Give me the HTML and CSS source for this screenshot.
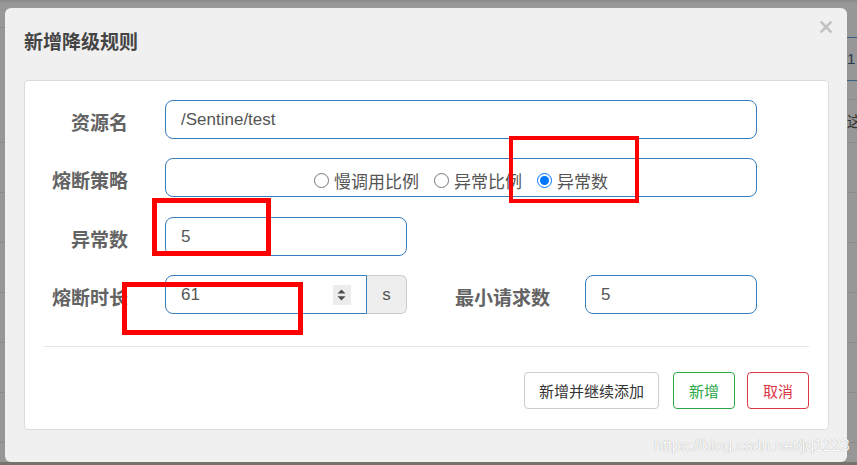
FILE: index.html
```html
<!DOCTYPE html>
<html lang="zh-CN">
<head>
<meta charset="utf-8">
<title>新增降级规则</title>
<link rel="stylesheet" href="styles.css">
</head>
<body>
<div class="page">
  <div class="bg-main">
    <div class="bg-head"></div>
    <div class="bg-tall"></div>
    <div class="bg-row"></div>
    <div class="bg-row"></div>
    <div class="bg-row"></div>
    <div class="bg-row"></div>
    <div class="bg-row"></div>
    <div class="bg-row"></div>
  </div>
  <div class="bg-side">
    <div class="side-top"></div>
    <div class="side-cell side-blue">1</div>
    <div class="side-gap"></div>
    <div class="side-cell side-cjk">这</div>
    <div class="bg-row"></div>
    <div class="bg-row"></div>
    <div class="bg-row"></div>
    <div class="bg-row"></div>
    <div class="bg-row"></div>
    <div class="bg-row"></div>
  </div>
</div>

<div class="modal">
  <div class="modal-header">
    <h4 class="modal-title">新增降级规则</h4>
    <svg class="close" width="12" height="12" viewBox="0 0 12 12">
      <path d="M1.5 1.5 L10.5 10.5 M10.5 1.5 L1.5 10.5" stroke="#c2c2c2" stroke-width="2.6" stroke-linecap="square" fill="none"/>
    </svg>
  </div>
  <div class="panel">
    <div class="row">
      <label class="label">资源名</label>
      <input class="field wide" type="text" value="/Sentine/test">
    </div>
    <div class="row">
      <label class="label">熔断策略</label>
      <div class="field wide radio-box">
        <label class="opt"><input type="radio" name="grade"><span>慢调用比例</span></label>
        <label class="opt"><input type="radio" name="grade"><span>异常比例</span></label>
        <label class="opt"><input type="radio" name="grade" checked><span>异常数</span></label>
      </div>
    </div>
    <div class="row row-third">
      <label class="label">异常数</label>
      <input class="field short" type="text" value="5">
    </div>
    <div class="row">
      <label class="label">熔断时长</label>
      <div class="input-group">
        <div class="num">
          <input class="num-input" type="text" value="61">
          <svg class="spin" width="18" height="20" viewBox="0 0 18 20">
            <rect width="18" height="20" fill="#ececec"/>
            <polygon points="4.5,8.6 12.5,8.6 8.5,4.4" fill="#4d4d4d"/>
            <polygon points="4.5,11.2 12.5,11.2 8.5,15.6" fill="#4d4d4d"/>
          </svg>
        </div>
        <span class="addon">s</span>
      </div>
      <label class="label label-inline">最小请求数</label>
      <input class="field min" type="text" value="5">
    </div>
    <div class="divider"></div>
    <div class="actions">
      <button class="btn btn-default">新增并继续添加</button>
      <button class="btn btn-success">新增</button>
      <button class="btn btn-danger">取消</button>
    </div>
  </div>
</div>

<div class="mark mark-1"></div>
<div class="mark mark-2"></div>
<div class="mark mark-3"></div>

<div class="watermark">https://blog.csdn.net/jq1223</div>
</body>
</html>
```

FILE: styles.css
```css
* { box-sizing: border-box; }

html, body {
  margin: 0;
  padding: 0;
}

body {
  width: 857px;
  height: 465px;
  overflow: hidden;
  position: relative;
  background: #979797;
  font-family: "Noto Sans CJK SC", "Liberation Sans", sans-serif;
}

/* background page (dimmed) */
.page {
  display: flex;
  height: 465px;
  border-top: 2px solid #8c8c8c;
  border-bottom: 3px solid #76726d;
}

.bg-main { flex: 1; }

.bg-side {
  width: 10px;
  color: #1b3550;
  font-size: 15px;
  overflow: hidden;
}

.bg-head {
  height: 26px;
  border-bottom: 1px solid #8a8a8a;
}

.bg-tall {
  height: 115px;
  border-bottom: 1px solid #8a8a8a;
}

.bg-row {
  height: 50px;
  border-bottom: 1px solid #8a8a8a;
}

.side-top {
  height: 36px;
  border-bottom: 1px solid #3a5f88;
}

.side-cell {
  height: 43px;
  line-height: 42px;
  border-bottom: 1px solid #8a8a8a;
  font-family: "Liberation Sans", sans-serif;
  white-space: nowrap;
}

.side-blue {
  border-bottom-color: #3a5f88;
  color: #2a3a4a;
}

.side-gap {
  height: 19px;
  border-bottom: 1px solid #8a8a8a;
}

.side-cjk {
  font-family: "Noto Sans CJK SC", sans-serif;
  color: #333;
}

/* modal */
.modal {
  position: absolute;
  left: 5px;
  top: 8px;
  width: 842px;
  height: 454px;
  background: #f0f0f0;
  border-radius: 6px;
}

.modal-header {
  height: 72px;
  padding: 13px 15px 0 19px;
  display: flex;
  justify-content: space-between;
  align-items: flex-start;
}

.modal-title {
  margin: 7px 0 0 0;
  font-size: 19px;
  line-height: 26px;
  font-weight: bold;
  color: #444;
}

.close { display: block; }

.panel {
  margin: 0 18px 0 19px;
  height: 350px;
  background: #fff;
  border: 1px solid #dcdcdc;
  border-radius: 4px;
  padding: 19px 19px 0 19px;
}

.row {
  display: flex;
  align-items: center;
  height: 39px;
}

.row + .row { margin-top: 19px; }
.row.row-third { margin-top: 20px; }

.label {
  width: 84px;
  flex: none;
  text-align: right;
  font-size: 19px;
  line-height: 1;
  font-weight: bold;
  color: #636363;
  padding-top: 3px;
}

.label-inline {
  width: auto;
  margin-left: 48px;
}

.field {
  height: 39px;
  flex: none;
  margin: 0 0 0 37px;
  border: 1px solid #3a7dbd;
  border-radius: 8px;
  padding: 0 15px;
  font-family: "Liberation Sans", sans-serif;
  font-size: 17px;
  color: #555;
  background: #fff;
  outline: none;
}

.wide { width: 592px; }
.short { width: 242px; }
.min { width: 172px; margin-left: 35px; }

.radio-box {
  display: flex;
  justify-content: center;
  align-items: center;
  gap: 15px;
  padding-top: 5px;
}

.opt {
  display: flex;
  align-items: center;
  gap: 5px;
  font-family: "Noto Sans CJK SC", sans-serif;
  font-size: 17px;
  line-height: 1;
  color: #555;
}

.opt input {
  width: 15px;
  height: 15px;
  margin: 0;
}

.input-group {
  display: flex;
  width: 242px;
  height: 39px;
  margin-left: 37px;
  flex: none;
}

.num {
  flex: 1;
  min-width: 0;
  display: flex;
  align-items: center;
  border: 1px solid #3a7dbd;
  border-radius: 8px 0 0 8px;
  padding: 0 15px;
  background: #fff;
}

.num-input {
  flex: 1;
  width: 0;
  min-width: 0;
  border: none;
  padding: 0;
  outline: none;
  background: transparent;
  font-family: "Liberation Sans", sans-serif;
  font-size: 17px;
  color: #555;
}

.spin { display: block; flex: none; margin-top: 1px; }

.addon {
  width: 40px;
  flex: none;
  display: flex;
  align-items: center;
  justify-content: center;
  background: #eee;
  border: 1px solid #ccc;
  border-left: none;
  border-radius: 0 6px 6px 0;
  font-family: "Liberation Sans", sans-serif;
  font-size: 17px;
  color: #555;
}

.divider {
  margin-top: 32px;
  border-top: 1px solid #e5e5e5;
}

.actions {
  margin-top: 25px;
  display: flex;
  justify-content: flex-end;
  gap: 12px;
}

.btn {
  height: 37px;
  padding: 0 15px;
  background: #fff;
  border: 1px solid #ccc;
  border-radius: 4px;
  font-family: "Noto Sans CJK SC", sans-serif;
  font-size: 15px;
  line-height: 1;
  color: #333;
}

.btn-default {
  padding: 0 14px;
  margin-right: 2px;
}

.btn-success {
  border-color: #28a745;
  color: #28a745;
}

.btn-danger {
  border-color: #dc3545;
  color: #dc3545;
}

/* red annotation boxes */
.mark {
  position: absolute;
  border: 5px solid #ff0000;
}

.mark-1 {
  left: 509px;
  top: 136px;
  width: 130px;
  height: 67px;
  border-width: 4px;
}

.mark-2 {
  left: 152px;
  top: 198px;
  width: 119px;
  height: 58px;
}

.mark-3 {
  left: 122px;
  top: 282px;
  width: 181px;
  height: 53px;
}

.watermark {
  position: absolute;
  left: 654px;
  top: 436px;
  font-family: "Liberation Sans", sans-serif;
  font-size: 16px;
  line-height: 20px;
  color: #fbfbfb;
  text-shadow: 0 0 1px rgba(0, 0, 0, 0.35);
  white-space: nowrap;
}
```
